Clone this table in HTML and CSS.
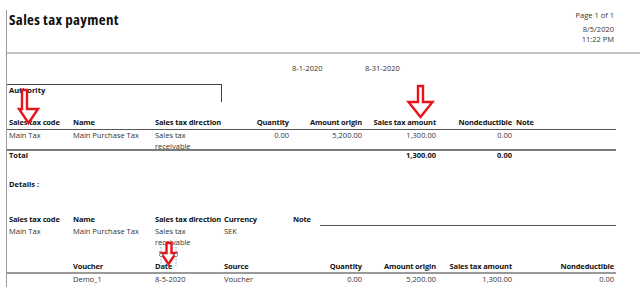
FILE: index.html
```html
<!DOCTYPE html>
<html lang="en">
<head>
<meta charset="utf-8">
<title>Sales tax payment</title>
<link rel="stylesheet" href="styles.css">
</head>
<body>
<div class="frame">
  <header class="top">
    <h1 class="title">Sales tax payment</h1>
    <div class="meta">
      <div class="page-no">Page 1 of 1</div>
      <div>8/5/2020</div>
      <div>11:22 PM</div>
    </div>
  </header>

  <div class="period">
    <span class="from">8-1-2020</span>
    <span>8-31-2020</span>
  </div>

  <div class="authority">Authority</div>

  <div class="grid t1 hdr hdr1">
    <div class="c1">Sales tax code</div>
    <div>Name</div>
    <div>Sales tax direction</div>
    <div class="r">Quantity</div>
    <div class="r">Amount origin</div>
    <div class="r">Sales tax amount</div>
    <div class="r">Nondeductible</div>
    <div class="note">Note</div>
  </div>
  <div class="grid t1 row1">
    <div class="c1">Main Tax</div>
    <div>Main Purchase Tax</div>
    <div class="wrap">Sales tax receivable</div>
    <div class="r">0.00</div>
    <div class="r">5,200.00</div>
    <div class="r">1,300.00</div>
    <div class="r">0.00</div>
    <div class="note"></div>
  </div>
  <div class="grid t1 total">
    <div class="c1">Total</div>
    <div></div>
    <div></div>
    <div></div>
    <div></div>
    <div class="r">1,300.00</div>
    <div class="r">0.00</div>
    <div></div>
  </div>

  <div class="details">Details :</div>

  <div class="grid t2 hdr hdr2">
    <div class="c1">Sales tax code</div>
    <div>Name</div>
    <div>Sales tax direction</div>
    <div>Currency</div>
    <div>Note</div>
  </div>
  <div class="rule"></div>
  <div class="grid t2 row2">
    <div class="c1">Main Tax</div>
    <div>Main Purchase Tax</div>
    <div class="wrap">Sales tax receivable</div>
    <div>SEK</div>
    <div></div>
  </div>

  <div class="grid t3 hdr hdr3">
    <div></div>
    <div>Voucher</div>
    <div>Date</div>
    <div>Source</div>
    <div class="r">Quantity</div>
    <div class="r">Amount origin</div>
    <div class="r">Sales tax amount</div>
    <div class="r last">Nondeductible</div>
  </div>
  <div class="grid t3 row3">
    <div></div>
    <div>Demo_1</div>
    <div>8-5-2020</div>
    <div>Voucher</div>
    <div class="r">0.00</div>
    <div class="r">5,200.00</div>
    <div class="r">1,300.00</div>
    <div class="r last">0.00</div>
  </div>
</div>

<svg class="marks" width="640" height="295" viewBox="0 0 640 295" aria-hidden="true">
  <g class="arrow">
    <polygon points="22,90 27,90 27,109 38,109 28.5,123 19,109 22,109"/>
    <polygon points="418,86 423,86 423,102 432.5,102 420.5,117 408.5,102 418,102"/>
    <polygon points="166.5,243 171.5,243 171.5,253 176,253 168.5,264 161,253 166.5,253"/>
  </g>
  <g class="sel">
    <line x1="161" y1="241" x2="161" y2="266"/>
    <line x1="176" y1="241" x2="176" y2="266"/>
  </g>
  <g class="handle">
    <circle cx="161" cy="255" r="1.6"/>
    <circle cx="176" cy="255" r="1.6"/>
  </g>
</svg>
</body>
</html>
```

FILE: styles.css
```css
html, body {
  margin: 0;
  background: #ffffff;
}

body {
  position: relative;
  width: 640px;
  height: 295px;
  overflow: hidden;
  font-family: "Open Sans", "Liberation Sans", sans-serif;
  font-size: 7.5px;
  color: #333333;
}

.frame {
  margin: 10px 0 0 6px;
  height: 277px;
  border-left: 1px solid #9a9a9a;
  box-sizing: border-box;
}

.top {
  display: flex;
  justify-content: space-between;
  height: 44px;
  border-bottom: 2px solid #c4c4c4;
  box-sizing: border-box;
}

.title {
  margin: 0;
  padding-left: 2px;
  font-size: 15px;
  font-weight: 700;
  font-stretch: 87%;
  letter-spacing: 0.3px;
  line-height: 18px;
  color: #111111;
}

.meta {
  padding-right: 26px;
  text-align: right;
  line-height: 10px;
}

.page-no {
  margin-bottom: 4px;
}

.period {
  display: flex;
  margin-top: 9px;
  padding-left: 285px;
  line-height: 10px;
}

.from {
  width: 73px;
}

.authority {
  width: 215px;
  height: 18px;
  margin-top: 11px;
  padding-left: 2px;
  border-top: 1px solid #444444;
  border-right: 1px solid #444444;
  box-sizing: border-box;
  font-weight: 700;
  line-height: 10px;
  color: #111111;
}

.grid {
  display: grid;
  width: 609px;
}

.t1 {
  grid-template-columns: 66px 82px 65px 69px 73px 74px 76px 104px;
}

.t2 {
  grid-template-columns: 66px 82px 69px 69px 1fr;
}

.t3 {
  grid-template-columns: 66px 82px 69px 65px 73px 74px 76px 104px;
}

.c1 {
  padding-left: 2px;
}

.r {
  text-align: right;
}

.last {
  padding-right: 2px;
}

.note {
  padding-left: 4px;
}

.hdr {
  font-weight: 700;
  letter-spacing: -0.15px;
  color: #111111;
  white-space: nowrap;
  line-height: 11px;
}

.hdr1 {
  height: 28px;
  padding-bottom: 1px;
  align-items: end;
  border-bottom: 1px solid #555555;
  box-sizing: border-box;
}

.row1 {
  height: 19px;
  line-height: 11px;
}

.wrap {
  padding-right: 20px;
}

.total {
  height: 11px;
  border-top: 2px solid #7a7a7a;
  box-sizing: border-box;
  font-weight: 700;
  line-height: 9px;
  color: #111111;
}

.details {
  margin-top: 19px;
  padding-left: 2px;
  font-weight: 700;
  line-height: 10px;
  color: #111111;
}

.hdr2 {
  margin-top: 25px;
}

.rule {
  width: 296px;
  height: 1px;
  margin-left: 313px;
  background: #555555;
}

.row2 {
  line-height: 11px;
}

.hdr3 {
  margin-top: 13px;
  border-bottom: 2px solid #9a9a9a;
}

.row3 {
  line-height: 11px;
}

.marks {
  position: absolute;
  left: 0;
  top: 0;
  pointer-events: none;
}

.arrow polygon {
  fill: #ffffff;
  stroke: #e8141b;
  stroke-width: 2.4;
  stroke-linejoin: miter;
}

.sel line {
  stroke: #4a8fd8;
  stroke-width: 0.8;
  stroke-dasharray: 1.5 1.5;
}

.handle circle {
  fill: #ffffff;
  stroke: #666666;
  stroke-width: 0.7;
}
```
